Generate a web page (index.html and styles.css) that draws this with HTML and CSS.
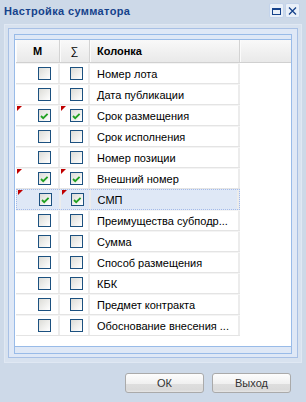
FILE: index.html
```html
<!DOCTYPE html>
<html lang="ru">
<head>
  <meta charset="UTF-8">
  <title>Настройка сумматора</title>
  <link rel="stylesheet" href="styles.css">
</head>
<body>
  <div class="window">
    <div class="window-header">
      <span class="window-title">Настройка сумматора</span>
      <div class="tools">
        <span class="tool">
          <svg width="13" height="13" viewBox="0 0 13 13">
            <rect x="2.5" y="4.5" width="8" height="6" fill="none" stroke="#15428b"/>
            <rect x="2" y="4" width="9" height="2" fill="#15428b"/>
          </svg>
        </span>
        <span class="tool">
          <svg width="13" height="13" viewBox="0 0 13 13">
            <path d="M3 3.5 L10 10.5 M10 3.5 L3 10.5" stroke="#15428b" stroke-width="1.3" fill="none"/>
          </svg>
        </span>
      </div>
    </div>

    <div class="window-frame">
      <div class="window-body">
        <div class="panel">
          <div class="tbar"></div>
          <div class="grid">
            <div class="grid-header">
              <div class="hd hd-m">М</div>
              <div class="hd hd-s">∑</div>
              <div class="hd hd-name">Колонка</div>
              <div class="hd hd-fill"></div>
            </div>
            <div class="grid-body" id="rows"></div>
          </div>
          <div class="bbar"></div>
        </div>
      </div>
    </div>

    <div class="buttons">
      <button type="button" class="btn">ОК</button>
      <button type="button" class="btn">Выход</button>
    </div>
  </div>

  <script>
    const columns = [
      { name: 'Номер лота', on: false },
      { name: 'Дата публикации', on: false },
      { name: 'Срок размещения', on: true },
      { name: 'Срок исполнения', on: false },
      { name: 'Номер позиции', on: false },
      { name: 'Внешний номер', on: true },
      { name: 'СМП', on: true, selected: true },
      { name: 'Преимущества субподр...', on: false },
      { name: 'Сумма', on: false },
      { name: 'Способ размещения', on: false },
      { name: 'КБК', on: false },
      { name: 'Предмет контракта', on: false },
      { name: 'Обоснование внесения ...', on: false }
    ];

    const tick = '<svg width="11" height="11" viewBox="0 0 11 11"><path d="M2 6 L4.2 8.2 L8.6 3.8" fill="none" stroke="#21a121" stroke-width="1.8"/></svg>';

    function checkbox(on) {
      return '<span class="check">' + (on ? tick : '') + '</span>';
    }

    document.getElementById('rows').innerHTML = columns.map(function (c) {
      const dirty = c.on ? ' dirty' : '';
      return `
        <div class="row${c.selected ? ' selected' : ''}">
          <div class="cell c-m${dirty}">${checkbox(c.on)}</div>
          <div class="cell c-s${dirty}">${checkbox(c.on)}</div>
          <div class="cell c-name">${c.name}</div>
        </div>`;
    }).join('');
  </script>
</body>
</html>
```

FILE: styles.css
```css
* {
  box-sizing: border-box;
}
body {
  margin: 0;
  font-family: "Liberation Sans", Arial, sans-serif;
  font-size: 11px;
}
.window {
  width: 306px;
  height: 402px;
  background: #cdd9e8;
  display: flex;
  flex-direction: column;
}
.window-header {
  height: 24px;
  display: flex;
  align-items: flex-start;
  justify-content: space-between;
  padding: 3px 6px 0 4px;
}
.window-title {
  margin-top: 1px;
  line-height: 15px;
  font-weight: bold;
  letter-spacing: 0.35px;
  color: #15428b;
}
.tools {
  display: flex;
  gap: 1px;
}
.tool {
  width: 15px;
  height: 15px;
  border: 1px solid #c3d3ea;
  border-radius: 2px;
  background: #e9f0f9;
  display: flex;
}
.window-frame {
  margin: 0 4px;
  height: 339px;
  border: 1px solid #e0e8f3;
  background: #d8e2ef;
  padding: 3px 3px 4px;
}
.window-body {
  height: 330px;
  border: 1px solid #a8c0e5;
  background: #dfe8f6;
  padding: 5px 5px 3px;
}
.panel {
  height: 320px;
  border: 1px solid #99bbe8;
  background: #dfe8f6;
  display: flex;
  flex-direction: column;
}
.tbar {
  height: 5px;
  border-bottom: 1px solid #99bbe8;
}
.grid {
  height: 306px;
  background: #fff;
  padding-left: 1px;
}
.bbar {
  height: 7px;
  border-top: 1px solid #99bbe8;
}

/* header */
.grid-header {
  display: flex;
  height: 23px;
  border-bottom: 1px solid #d0d0d0;
  background: linear-gradient(#f9f9f9, #e9e9e9);
}
.hd {
  display: flex;
  align-items: center;
  font-weight: bold;
  color: #000;
  border-right: 1px solid #d3d3d3;
  box-shadow: inset 1px 0 0 #fbfbfb;
}
.hd-m {
  width: 44px;
  justify-content: center;
}
.hd-s {
  width: 30px;
  justify-content: center;
  font-weight: normal;
}
.hd-name {
  width: 150px;
  padding-left: 7px;
}
.hd-fill {
  flex: 1;
  border-right: none;
}

/* rows */
.row {
  display: flex;
  width: 224px;
  height: 21px;
  border-top: 1px solid #f4f4f4;
  border-bottom: 1px solid #e4e4e4;
  color: #000;
}
.row.selected {
  background: #dfe8f6;
  border: 1px dotted #a3bae9;
}
.cell {
  position: relative;
  display: flex;
  align-items: center;
  border-right: 2px solid #ececec;
}
.c-m {
  width: 44px;
  padding-left: 22px;
}
.c-s {
  width: 30px;
  padding-left: 10px;
}
.c-name {
  width: 150px;
  padding: 0 3px 0 7px;
  white-space: nowrap;
  overflow: hidden;
}
.dirty::before {
  content: "";
  position: absolute;
  left: 1px;
  top: 0;
  border-top: 5px solid #c00000;
  border-right: 5px solid transparent;
}
.check {
  width: 13px;
  height: 13px;
  border: 1px solid #1c5180;
  background: linear-gradient(135deg, #dcdcd7, #ffffff);
  display: flex;
}

/* buttons */
.buttons {
  display: flex;
  justify-content: flex-end;
  gap: 8px;
  padding: 10px 15px 0 0;
}
.btn {
  width: 79px;
  height: 20px;
  padding: 0;
  border: 1px solid #aaaaaa;
  border-radius: 3px;
  background: linear-gradient(#fdfdfd, #f0f0f0 55%, #dedede 56%, #dadada 88%, #e6e6e6);
  font-family: "Liberation Sans", Arial, sans-serif;
  font-size: 11px;
  color: #333;
}
```
